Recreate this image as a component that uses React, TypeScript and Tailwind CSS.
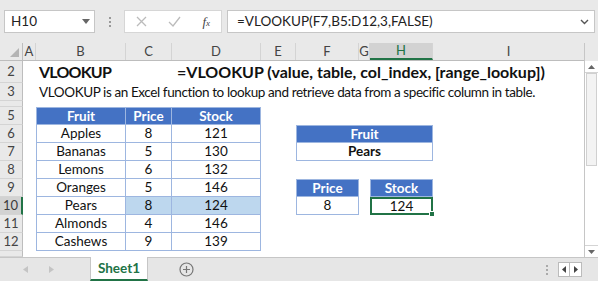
import React from 'react';

const font = { fontFamily: 'Lato, "Open Sans", sans-serif' };

const hdrCell = 'flex items-center justify-center border-r border-[#d4d4d4] text-[13px] text-[#444]';
const tblBorder = 'border-r border-b border-[#9db6e0]';

const RowHead = ({ n, active }: { n?: string; active?: boolean }) => (
  <div
    className={`w-[23px] shrink-0 flex items-center justify-center text-[13px] border-b border-[#d4d4d4] ${
      active ? 'bg-[#d2d2d2] border-r-2 border-r-[#217346] text-[#3a3a3a]' : 'bg-[#e9e9e9] border-r border-r-[#bdbdbd] text-[#444]'
    }`}
  >
    {n}
  </div>
);

const Row = ({ n, h, active, children }: { n?: string; h: string; active?: boolean; children?: React.ReactNode }) => (
  <div className={`flex ${h}`}>
    <RowHead n={n} active={active} />
    {children}
  </div>
);

const fruits = [
  ['Apples', '8', '121'],
  ['Bananas', '5', '130'],
  ['Lemons', '6', '132'],
  ['Oranges', '5', '146'],
  ['Pears', '8', '124'],
  ['Almonds', '4', '146'],
  ['Cashews', '9', '139'],
];

const TableCells = ({ r }: { r: string[] }) => {
  const sel = r[0] === 'Pears';
  return (
    <>
      <div className={`w-[90px] shrink-0 flex items-center justify-center border-l border-[#9db6e0] ${tblBorder}`}>{r[0]}</div>
      <div className={`w-[46px] shrink-0 flex items-center justify-center ${tblBorder} ${sel ? 'bg-[#bdd7ee]' : ''}`}>{r[1]}</div>
      <div className={`w-[89px] shrink-0 flex items-center justify-center ${tblBorder} ${sel ? 'bg-[#bdd7ee]' : ''}`}>{r[2]}</div>
    </>
  );
};

const Right = ({ i }: { i: number }) => {
  // i = data row index (0 = row 6)
  if (i === 0)
    return (
      <div className="w-[137px] shrink-0 flex items-center justify-center bg-[#4472c4] text-white font-bold border border-[#9db6e0]">
        Fruit
      </div>
    );
  if (i === 1)
    return (
      <div className="w-[137px] shrink-0 flex items-center justify-center font-bold border-l border-r border-b border-[#9db6e0]">
        Pears
      </div>
    );
  if (i === 3)
    return (
      <>
        <div className="w-[63px] shrink-0 flex items-center justify-center bg-[#4472c4] text-white font-bold border border-[#9db6e0]">Price</div>
        <div className="w-[11px] shrink-0" />
        <div className="w-[63px] shrink-0 flex items-center justify-center bg-[#4472c4] text-white font-bold border border-[#9db6e0]">Stock</div>
      </>
    );
  if (i === 4)
    return (
      <>
        <div className="w-[63px] shrink-0 flex items-center justify-center border-l border-r border-b border-[#9db6e0]">8</div>
        <div className="w-[11px] shrink-0" />
        <div className="relative w-[63px] shrink-0 flex items-center justify-center border-2 border-[#217346]">
          124
          <div className="absolute -right-[4px] -bottom-[4px] w-[6px] h-[6px] bg-[#217346] border border-white" />
        </div>
      </>
    );
  return <div className="w-[137px] shrink-0" />;
};

export default function App() {
  return (
    <div className="w-[598px] h-[288px] bg-white overflow-hidden flex flex-col text-[13.5px] text-[#111]" style={font}>
      {/* formula bar */}
      <div className="h-[43px] shrink-0 bg-[#e9e9e9] flex items-start pt-[10px]">
        <div className="ml-[4px] w-[91px] h-[23px] bg-white border border-[#c6c6c6] flex items-center pl-[6px] pr-[4px] text-[#222]">
          <span className="flex-1">H10</span>
          <svg width="8" height="5" viewBox="0 0 8 5"><path d="M0 0h8L4 5z" fill="#666" /></svg>
        </div>
        <div className="w-[29px] h-[23px] flex flex-col items-center justify-center gap-[2px]">
          <div className="w-[2px] h-[2px] bg-[#999]" />
          <div className="w-[2px] h-[2px] bg-[#999]" />
          <div className="w-[2px] h-[2px] bg-[#999]" />
        </div>
        <div className="w-[98px] h-[23px] bg-white border border-[#d6d6d6] flex items-center justify-between px-[11px]">
          <svg width="11" height="11" viewBox="0 0 11 11"><path d="M1 1l9 9M10 1l-9 9" stroke="#bbb" strokeWidth="1.3" /></svg>
          <svg width="13" height="11" viewBox="0 0 13 11"><path d="M1 6l4 4 7-9" stroke="#bbb" strokeWidth="1.3" fill="none" /></svg>
          <span className="text-[#444] italic text-[13px]" style={{ fontFamily: '"Liberation Serif", serif' }}>
            f<span className="text-[9px]">x</span>
          </span>
        </div>
        <div className="ml-[5px] mr-[3px] flex-1 h-[23px] bg-white border border-[#c6c6c6] flex items-center pl-[9px] pr-[5px] text-[#222]">
          <span className="flex-1">=VLOOKUP(F7,B5:D12,3,FALSE)</span>
          <svg width="9" height="6" viewBox="0 0 9 6"><path d="M1 1l3.5 3.5L8 1" stroke="#555" strokeWidth="1.4" fill="none" /></svg>
        </div>
      </div>

      {/* sheet */}
      <div className="flex flex-1 min-h-0">
        <div className="flex-1 flex flex-col">
          {/* column headers */}
          <div className="flex h-[18px] bg-[#e9e9e9] border-b border-[#bdbdbd]">
            <div className="w-[23px] shrink-0 flex items-end justify-end pr-[3px] pb-[3px] border-r border-[#bdbdbd]">
              <svg width="9" height="9" viewBox="0 0 9 9"><path d="M9 0v9H0z" fill="#b4b4b4" /></svg>
            </div>
            <div className={`w-[13px] shrink-0 ${hdrCell}`}>A</div>
            <div className={`w-[90px] shrink-0 ${hdrCell}`}>B</div>
            <div className={`w-[46px] shrink-0 ${hdrCell}`}>C</div>
            <div className={`w-[89px] shrink-0 ${hdrCell}`}>D</div>
            <div className={`w-[35px] shrink-0 ${hdrCell}`}>E</div>
            <div className={`w-[63px] shrink-0 ${hdrCell}`}>F</div>
            <div className={`w-[11px] shrink-0 ${hdrCell}`}>G</div>
            <div className={`w-[63px] shrink-0 ${hdrCell} bg-[#d2d2d2] border-b-2 border-b-[#217346] text-[#217346]`}>H</div>
            <div className="flex-1 flex items-center justify-center text-[13px] text-[#444]">I</div>
          </div>

          <Row n="2" h="h-[22px]">
            <div className="w-[13px] shrink-0" />
            <div className="w-[90px] shrink-0 flex items-center pl-[3px] font-bold text-[16px] tracking-[-0.8px] whitespace-nowrap">VLOOKUP</div>
            <div className="w-[46px] shrink-0" />
            <div className="w-[89px] shrink-0 flex items-center pl-[5px] font-bold text-[16px] whitespace-nowrap">
              =VLOOKUP (value, table, col_index, [range_lookup])
            </div>
          </Row>
          <Row n="3" h="h-[18px]">
            <div className="w-[13px] shrink-0" />
            <div className="w-[90px] shrink-0 flex items-center pl-[3px] tracking-[-0.4px] whitespace-nowrap">
              VLOOKUP is an Excel function to lookup and retrieve data from a specific column in table.
            </div>
          </Row>
          <Row h="h-[6px]" />
          <Row n="5" h="h-[18px]">
            <div className="w-[13px] shrink-0" />
            <div className="w-[90px] shrink-0 flex items-center justify-center bg-[#4472c4] text-white font-bold border border-[#9db6e0]">Fruit</div>
            <div className="w-[46px] shrink-0 flex items-center justify-center bg-[#4472c4] text-white font-bold border-t border-r border-b border-[#9db6e0]">Price</div>
            <div className="w-[89px] shrink-0 flex items-center justify-center bg-[#4472c4] text-white font-bold border-t border-r border-b border-[#9db6e0]">Stock</div>
          </Row>
          {fruits.map((r, i) => (
            <Row key={r[0]} n={String(i + 6)} h="h-[18px]" active={i === 4}>
              <div className="w-[13px] shrink-0" />
              <TableCells r={r} />
              <div className="w-[35px] shrink-0" />
              <Right i={i} />
            </Row>
          ))}
          <Row h="flex-1" />
        </div>

        {/* vertical scrollbar */}
        <div className="w-[14px] shrink-0 bg-white border-l border-[#c6c6c6] flex flex-col">
          <div className="h-[18px] bg-[#e9e9e9]" />
          <div className="h-[12px] flex items-center justify-center border-b border-[#d4d4d4]">
            <svg width="7" height="4" viewBox="0 0 7 4"><path d="M0 4h7L3.5 0z" fill="#666" /></svg>
          </div>
          <div className="h-[93px] mx-[1px] bg-[#f3f3f3] border border-[#d0d0d0]" />
          <div className="flex-1" />
          <div className="h-[12px] flex items-center justify-center border-t border-[#d4d4d4]">
            <svg width="7" height="4" viewBox="0 0 7 4"><path d="M0 0h7L3.5 4z" fill="#666" /></svg>
          </div>
        </div>
      </div>

      {/* sheet tabs */}
      <div className="h-[24px] shrink-0 bg-[#e6e6e6] flex items-stretch border-t border-[#c6c6c6]">
        <div className="w-[90px] flex items-center pl-[23px] gap-[21px] text-[#bbb]">
          <svg width="5" height="7" viewBox="0 0 5 7"><path d="M5 0v7L0 3.5z" fill="#c4c4c4" /></svg>
          <svg width="5" height="7" viewBox="0 0 5 7"><path d="M0 0v7l5-3.5z" fill="#c4c4c4" /></svg>
        </div>
        <div className="w-[58px] -mt-[1px] bg-white border-x border-[#c6c6c6] border-b-2 border-b-[#217346] flex items-center justify-center font-bold text-[#217346]">
          Sheet1
        </div>
        <div className="w-[76px] flex items-center justify-center">
          <svg width="15" height="15" viewBox="0 0 15 15">
            <circle cx="7.5" cy="7.5" r="6.5" fill="none" stroke="#777" strokeWidth="1.2" />
            <path d="M7.5 4v7M4 7.5h7" stroke="#777" strokeWidth="1.2" />
          </svg>
        </div>
        <div className="flex-1" />
        <div className="w-[10px] flex flex-col items-center justify-center gap-[2px]">
          <div className="w-[2px] h-[2px] bg-[#aaa]" />
          <div className="w-[2px] h-[2px] bg-[#aaa]" />
          <div className="w-[2px] h-[2px] bg-[#aaa]" />
        </div>
        <div className="ml-[6px] mr-[16px] my-[4px] flex bg-white border border-[#bbb]">
          <div className="w-[11px] flex items-center justify-center border-r border-[#bbb]">
            <svg width="4" height="7" viewBox="0 0 4 7"><path d="M4 0v7L0 3.5z" fill="#444" /></svg>
          </div>
          <div className="w-[11px] flex items-center justify-center">
            <svg width="4" height="7" viewBox="0 0 4 7"><path d="M0 0v7l4-3.5z" fill="#444" /></svg>
          </div>
        </div>
      </div>
      <div className="h-[7px] shrink-0 bg-white" />
    </div>
  );
}
